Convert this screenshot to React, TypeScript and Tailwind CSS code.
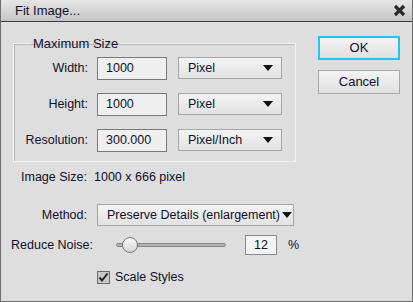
const font = "font-['Tahoma','Liberation_Sans',sans-serif] text-[12.5px] text-[#10102a]";

function Field({ value, w = "w-[70px]" }: { value: string; w?: string }) {
  return (
    <div
      className={`flex h-[23px] ${w} items-center border border-[#7a7a7a] bg-[#efefef] pl-[8px]`}
    >
      {value}
    </div>
  );
}

function Caret() {
  return (
    <svg width="10" height="6" viewBox="0 0 10 6" className="shrink-0">
      <path d="M0 0H10L5 6Z" fill="#111" />
    </svg>
  );
}

function Select({ value, w, pl = "pl-[9px]", pr = "pr-[8px]" }: { value: string; w: string; pl?: string; pr?: string }) {
  return (
    <div
      className={`flex h-[22px] ${w} items-center justify-between border border-[#a6a6a6] bg-gradient-to-b from-[#f4f4f4] to-[#e2e2e2] ${pl} ${pr}`}
    >
      <span>{value}</span>
      <Caret />
    </div>
  );
}

function Row({ label, value, unit }: { label: string; value: string; unit: string }) {
  return (
    <div className="flex h-[23px] items-center">
      <span className="w-[74px] text-right">{label}</span>
      <div className="ml-[9px]">
        <Field value={value} />
      </div>
      <div className="ml-[11px]">
        <Select value={unit} w="w-[104px]" />
      </div>
    </div>
  );
}

export default function App() {
  return (
    <div className={`h-[302px] w-[413px] overflow-hidden bg-[#dedede] ${font}`}>
      <div className="flex h-full flex-col border border-t-0 border-[#6e6e6e]">
        {/* title bar */}
        <div className="flex h-[22px] shrink-0 items-center justify-between border-b border-[#3c3c3c] bg-gradient-to-b from-[#e6e6e6] to-[#c6c6c6] pl-[14px] pr-[6px]">
          <span className="text-[13px]">Fit Image...</span>
          <svg width="13" height="13" viewBox="0 0 13 13">
            <path d="M2 2L11 11M11 2L2 11" stroke="#2a2a2a" strokeWidth="3.2" />
          </svg>
        </div>

        <div className="flex">
          <div className="w-[305px] shrink-0">
            {/* group box */}
            <fieldset className="ml-[12px] mt-[12px] w-[283px] border border-[#f4f4f4] pb-[9px] shadow-[inset_1px_1px_0_#b8b8b8]">
              <legend className="ml-[17px] px-[2px] text-[13px]">Maximum Size</legend>
              <div className="mt-[3px] flex flex-col gap-[13px]">
                <Row label="Width:" value="1000" unit="Pixel" />
                <Row label="Height:" value="1000" unit="Pixel" />
                <Row label="Resolution:" value="300.000" unit="Pixel/Inch" />
              </div>
            </fieldset>

            <div className="ml-[20px] mt-[6px] flex">
              <span>Image Size:</span>
              <span className="ml-[7px]">1000 x 666 pixel</span>
            </div>

            <div className="mt-[18px] flex items-center">
              <span className="w-[86px] text-right">Method:</span>
              <div className="ml-[10px]">
                <Select value="Preserve Details (enlargement)" w="w-[197px]" pl="pl-[9px]" pr="pr-[1px]" />
              </div>
            </div>

            <div className="mt-[9px] flex items-center">
              <span className="ml-[10px] w-[104px]">Reduce Noise:</span>
              <div className="relative ml-[1px] h-[16px] w-[110px]">
                <div className="absolute left-0 right-0 top-[6px] h-[4px] rounded-full border border-[#8a8a8a] bg-[#b0b0b0]" />
                <div className="absolute left-[6px] top-0 h-[16px] w-[16px] rounded-full border border-[#7a7a7a] bg-gradient-to-b from-[#fafafa] to-[#d6d6d6]" />
              </div>
              <div className="ml-[19px] flex h-[20px] w-[32px] items-center justify-center border border-[#8a8a8a] bg-[#f4f4f4]">
                12
              </div>
              <span className="ml-[11px]">%</span>
            </div>

            <div className="ml-[96px] mt-[13px] flex items-center">
              <div className="flex h-[13px] w-[13px] items-center justify-center border border-[#6a6a6a] bg-[#c8c8c8]">
                <svg width="11" height="11" viewBox="0 0 11 11">
                  <path d="M1.5 5.5L4 8.5L9.5 1.5" stroke="#222" strokeWidth="2" fill="none" />
                </svg>
              </div>
              <span className="ml-[5px]">Scale Styles</span>
            </div>
          </div>

          <div className="ml-[12px] mt-[14px] flex flex-col gap-[10px]">
            <button className="flex h-[24px] w-[82px] items-center justify-center border-2 border-[#1fc6f2] bg-gradient-to-b from-[#f4f4f4] to-[#e0e0e0] text-[13px]">
              OK
            </button>
            <button className="flex h-[24px] w-[82px] items-center justify-center border border-[#a8a8a8] bg-gradient-to-b from-[#f4f4f4] to-[#e0e0e0] text-[13px]">
              Cancel
            </button>
          </div>
        </div>
      </div>
    </div>
  );
}
